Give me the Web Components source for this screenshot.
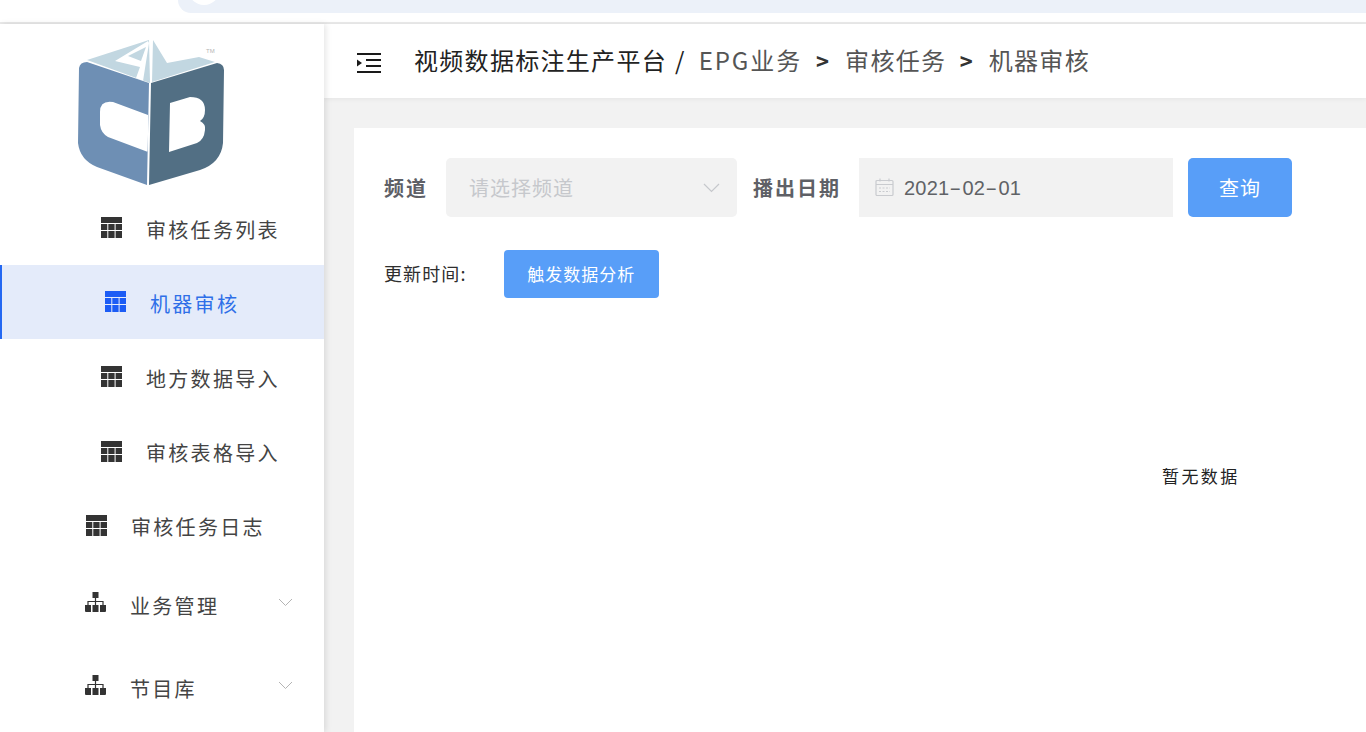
<!DOCTYPE html>
<html lang="zh">
<head>
<meta charset="utf-8">
<title>视频数据标注生产平台</title>
<style>
  html, body { margin: 0; height: 100%; background: #fff; overflow: hidden; }
  body { font-family: "Noto Sans CJK SC", "Liberation Sans", sans-serif; }
</style>
</head>
<body>
<app-shell>
  <side-nav slot="side">
    <nav-item icon="table" indent="101">审核任务列表</nav-item>
    <nav-item icon="table" indent="105" active>机器审核</nav-item>
    <nav-item icon="table" indent="101">地方数据导入</nav-item>
    <nav-item icon="table" indent="101">审核表格导入</nav-item>
    <nav-item icon="table" indent="86">审核任务日志</nav-item>
    <nav-item icon="tree" indent="85" arrow tall>业务管理</nav-item>
    <nav-item icon="tree" indent="85" arrow tall>节目库</nav-item>
  </side-nav>
  <top-bar slot="top"></top-bar>
  <query-panel slot="main"></query-panel>
</app-shell>

<script>
class AppShell extends HTMLElement {
  constructor() {
    super();
    this.attachShadow({ mode: "open" });
    this.shadowRoot.innerHTML = `
      <style>
        :host { display: flex; flex-direction: column; height: 732px; overflow: hidden; }
        .strip { height: 22px; flex: none; background: #fff; border-bottom: 2px solid #e9e9e9; padding-left: 178px; overflow: hidden; }
        .addr { height: 13px; background: #ecf1f9; border-bottom-left-radius: 14px; padding-left: 10px; overflow: hidden; }
        .addr i { display: block; width: 32px; height: 32px; margin-top: -27px; border-radius: 50%; background: #fff; }
        .body { flex: 1; display: flex; min-height: 0; }
        .side { width: 324px; flex: none; background: #fff; box-shadow: 2px 0 6px rgba(0,0,0,.1); position: relative; z-index: 2; }
        .right { flex: 1; min-width: 0; display: flex; flex-direction: column; background: #f2f2f2; }
        .top { flex: none; background: #fff; box-shadow: 0 1px 5px rgba(0,0,0,.06); }
        .main { flex: 1; min-height: 0; padding: 30px 0 0 30px; }
      </style>
      <div class="strip"><div class="addr"><i></i></div></div>
      <div class="body">
        <div class="side"><slot name="side"></slot></div>
        <div class="right">
          <div class="top"><slot name="top"></slot></div>
          <div class="main"><slot name="main"></slot></div>
        </div>
      </div>
    `;
  }
}

class SideNav extends HTMLElement {
  constructor() {
    super();
    this.attachShadow({ mode: "open" });
    this.shadowRoot.innerHTML = `
      <style>
        :host { display: block; }
        .logo { height: 167px; }
        svg { display: block; }
      </style>
      <div class="logo">
        <svg width="240" height="167" viewBox="0 24 240 167">
          <path fill="#c2d7e1" d="M87 60 L149 40 L150 83 Z"/>
          <path fill="#fff" d="M148 41 L115 61 L140 67 L136 78 L143 81 L149 43 Z"/>
          <path fill="#c2d7e1" d="M128 56 L146 47 L141 61 Z"/>
          <path fill="#c2d7e1" d="M153 40 L167 63 L199 57 L215 62 L152 82 Z"/>
          <path fill="#6e8fb4" fill-rule="evenodd" d="M87 62 L149 83 L147 185 L97 167 Q80 160 78 143 L79 68 Q80 62 87 62 Z
            M148 115 L113 102 Q100 100 100 112 L100 125 Q101 133 108 137 L148 152 Z"/>
          <path fill="#526f84" fill-rule="evenodd" d="M151 83 L217 63 Q224 64 224 70 L223 143 Q221 163 200 170 L149 185 Z
            M170 103 L190 97 Q205 97 205 110 Q205 118 200 121 Q206 124 205 130 Q204 140 197 143 L169 152 Z"/>
          <text x="206" y="53" font-family="Liberation Sans, sans-serif" font-size="6" fill="#b5b5b5">TM</text>
        </svg>
      </div>
      <slot></slot>
    `;
  }
}

const ICONS = {
  table: `<svg width="21" height="21" viewBox="0 0 21 21"><path fill="currentColor" d="M0 0h21v6H0z M0 7h6.3v6H0z M7.3 7h6.3v6H7.3z M14.6 7H21v6h-6.4z M0 14h6.3v7H0z M7.3 14h6.3v7H7.3z M14.6 14H21v7h-6.4z"/></svg>`,
  tree: `<svg width="21" height="21" viewBox="0 0 21 21"><path fill="currentColor" d="M7.5 0h6v6h-6z M0 13h6v7H1a1 1 0 0 1-1-1z M7.5 13h6v7h-6z M15 13h6v6a1 1 0 0 1-1 1h-5z"/><path fill="none" stroke="currentColor" stroke-width="1.2" d="M10.500 6v7 M3 13V9.500h15V13"/></svg>`
};

class NavItem extends HTMLElement {
  constructor() {
    super();
    this.attachShadow({ mode: "open" });
    const ind = this.getAttribute("indent") || "100";
    const arrow = this.hasAttribute("arrow");
    this.shadowRoot.innerHTML = `
      <style>
        :host { display: block; color: #444; }
        :host([active]) { color: #2f6fe8; }
        .row { height: 74.2px; display: flex; align-items: center; box-sizing: border-box; padding: 2px 0 0 ${ind}px; font-size: 20px; letter-spacing: 2.3px; position: relative; }
        :host(:nth-child(n+3)) .row { padding-top: 4px; }
        :host([tall]) .row { height: 83px; padding-top: 4px; }
        :host([active]) .row { background: #e4ebfa; border-left: 2px solid #2468f2; padding-left: ${ind - 2}px; }
        .ico { width: 21px; height: 21px; margin-right: 24px; margin-top: -3px; color: #333; flex: none; }
        :host([active]) .ico { color: #1c5cf5; }
        :host([tall]) .ico { margin-top: -5px; }
        svg { display: block; }
        .arrow { position: absolute; left: 278px; top: 50%; margin-top: -5px; }
      </style>
      <div class="row" part="row">
        <span class="ico">${ICONS[this.getAttribute("icon")]}</span>
        <slot></slot>
        ${arrow ? `<svg class="arrow" width="15" height="9" viewBox="0 0 15 9"><path fill="none" stroke="#b4b4b4" stroke-width="1" d="M1 1l6.500 6.500L14 1"/></svg>` : ""}
      </div>
    `;
  }
}

class TopBar extends HTMLElement {
  constructor() {
    super();
    this.attachShadow({ mode: "open" });
    this.shadowRoot.innerHTML = `
      <style>
        :host { display: flex; align-items: center; height: 74px; box-sizing: border-box; padding: 0 0 3px 33px; font-size: 24px; letter-spacing: 1.3px; color: #555; white-space: nowrap; }
        svg { display: block; flex: none; margin-right: 33px; margin-top: 7px; }
        .home { color: #222; }
        .sep { margin: 0 13px 0 8px; color: #222; }
        .epg { letter-spacing: 1.900px; }
        .gt { margin: 0 16px 0 14px; color: #333; font-weight: 700; font-size: 22px; letter-spacing: 0; }
      </style>
      <svg width="24" height="20" viewBox="0 0 24 20">
        <path fill="none" stroke="#1a1a1a" stroke-width="2" d="M0 1h24 M9 7h15 M9 13h15 M0 19h24"/>
        <path fill="#1a1a1a" d="M0 6.500l5 3.500-5 3.500z"/>
      </svg>
      <span class="home">视频数据标注生产平台</span><span class="sep">/</span>
      <span class="epg">EPG业务</span><span class="gt">&gt;</span>
      <span>审核任务</span><span class="gt" style="margin-left:13.500px">&gt;</span>
      <span>机器审核</span>
    `;
  }
}

class FormField extends HTMLElement {
  constructor() {
    super();
    this.attachShadow({ mode: "open" });
    this.shadowRoot.innerHTML = `
      <style>
        :host { display: flex; align-items: center; height: 59px; box-sizing: border-box; background: #f2f2f2; color: #c6c8cc; font-size: 20px; letter-spacing: 1px; }
        ::slotted(*) { flex: none; }
      </style>
      <slot></slot>
    `;
  }
}

class BlueButton extends HTMLElement {
  constructor() {
    super();
    this.attachShadow({ mode: "open" });
    this.shadowRoot.innerHTML = `
      <style>
        :host { display: inline-flex; align-items: center; justify-content: center; box-sizing: border-box; background: #589ef8; border-radius: 4px; color: #fff; white-space: nowrap; }
      </style>
      <slot></slot>
    `;
  }
}

class QueryPanel extends HTMLElement {
  constructor() {
    super();
    this.attachShadow({ mode: "open" });
    this.shadowRoot.innerHTML = `
      <style>
        :host { display: block; height: 100%; background: #fff; box-sizing: border-box; padding: 30px 0 0 30px; }
        .filters { display: flex; align-items: center; height: 59px; }
        .lab { font-size: 20px; font-weight: 700; letter-spacing: 2px; color: #5e6066; white-space: nowrap; }
        .ch { width: 291px; margin: 0 16px 0 18px; padding: 0 17px 0 23px; border-radius: 5px; justify-content: space-between; }
        .dt { width: 314px; margin-left: 18px; padding-left: 16px; color: #606266; letter-spacing: .2px; font-family: "Liberation Sans", sans-serif; }
        .dt svg { margin-right: 10px; }
        .dt .val { margin-top: 2px; }
        .dt b { display: inline-block; font-weight: 400; margin: 0 3.200px; transform: scaleX(1.8); }
        .q { width: 104px; height: 59px; margin-left: 15px; font-size: 20px; letter-spacing: 1px; border-radius: 5px; }
        .update { display: flex; align-items: center; margin-top: 33px; height: 48px; }
        .ut { width: 120px; flex: none; margin-top: -3px; font-size: 18px; letter-spacing: 1.100px; color: #2e2e2e; white-space: nowrap; }
        .go { width: 154.5px; height: 48px; padding-bottom: 2px; font-size: 17px; letter-spacing: 1px; }
        .empty { margin-top: 165px; padding-left: 778px; font-size: 17px; letter-spacing: 2.400px; color: #222; line-height: 26px; white-space: nowrap; }
        svg { display: block; flex: none; }
      </style>
      <div class="filters">
        <span class="lab">频道</span>
        <form-field class="ch">
          <span>请选择频道</span>
          <svg width="17" height="10" viewBox="0 0 17 10"><path fill="none" stroke="#c6c8cc" stroke-width="1.200" d="M1 1l7.500 7.500L16 1"/></svg>
        </form-field>
        <span class="lab">播出日期</span>
        <form-field class="dt">
          <svg width="19" height="19" viewBox="0 0 19 19"><g fill="none" stroke="#c9cbcf" stroke-width="1.200"><rect x="1" y="2.500" width="17" height="15" rx="1"/><path d="M1 6.500h17 M5 .5v3 M14 .5v3"/><path stroke-dasharray="2 1.500" d="M4 10h11 M4 13.500h11"/></g></svg>
          <span class="val">2021<b>-</b>02<b>-</b>01</span>
        </form-field>
        <blue-button class="q">查询</blue-button>
      </div>
      <div class="update">
        <span class="ut">更新时间:</span>
        <blue-button class="go">触发数据分析</blue-button>
      </div>
      <div class="empty">暂无数据</div>
    `;
  }
}

customElements.define("app-shell", AppShell);
customElements.define("side-nav", SideNav);
customElements.define("nav-item", NavItem);
customElements.define("top-bar", TopBar);
customElements.define("form-field", FormField);
customElements.define("blue-button", BlueButton);
customElements.define("query-panel", QueryPanel);
</script>
</body>
</html>
